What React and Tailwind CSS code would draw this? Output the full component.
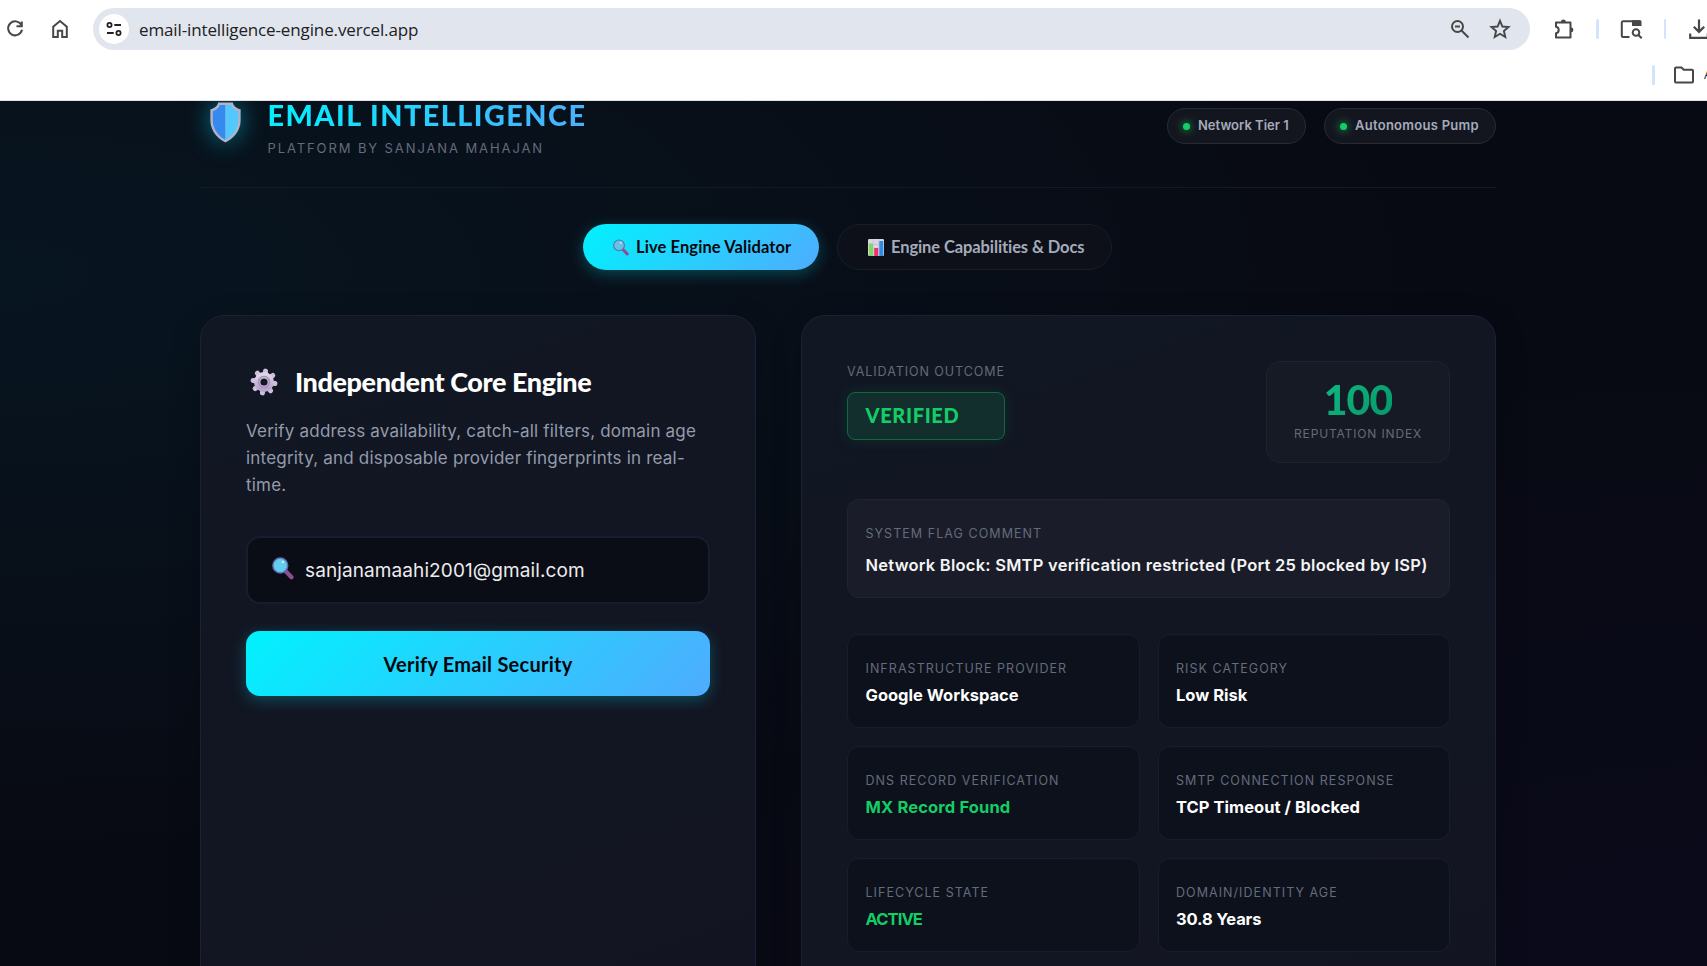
import React from 'react'
import { useState } from 'react'

// shared class strings
const display = "font-['Lato','Open_Sans',sans-serif]"
const card = 'rounded-[24px] border border-[#1c2234] bg-[linear-gradient(160deg,#111723,#131422)] shadow-[0_8px_32px_rgba(0,0,0,0.2)]'
const label = 'block leading-[18px] text-[#646b7b] uppercase whitespace-nowrap'

const cells = [
    { name: 'Infrastructure Provider', value: 'Google Workspace', valueCls: 'text-white' },
    { name: 'Risk Category', value: 'Low Risk', valueCls: 'text-white' },
    { name: 'DNS Record Verification', value: 'MX Record Found', valueCls: 'tracking-[0.15px] text-[#13ce66]' },
    { name: 'SMTP Connection Response', value: 'TCP Timeout / Blocked', valueCls: 'tracking-[0.05px] text-white' },
    { name: 'Lifecycle State', value: 'ACTIVE', valueCls: 'tracking-[-0.9px] text-[#13ce66]' },
    { name: 'Domain/Identity Age', value: '30.8 Years', valueCls: 'tracking-[-0.15px] text-white' },
]

const Magnifier = ({ className, lens = '#62cdec' }) => (
    <svg viewBox="0 0 22 23" className={className}>
        <path d="M14 14.5l5.5 5.8" stroke="#8d4f93" strokeWidth="4.2" strokeLinecap="round" />
        <circle cx="8.3" cy="8.5" r="7.4" fill={lens} stroke="#5d6fae" strokeWidth="1.5" />
        <circle cx="10.9" cy="5" r="1.3" fill="#b9efff" />
    </svg>
)

const Shield = () => (
    <svg viewBox="0 0 32 42" className="h-[41px] w-[33px] drop-shadow-[0_0_12px_rgba(0,200,230,0.55)]">
        <path d="M16 .5H8.5C8 3.5 5 6.5 .5 7.5V19C.5 30 9 38.5 16 41.5C23 38.5 31.5 30 31.5 19V7.5C27 6.5 24 3.5 23.5 .5Z" fill="#b5b1c6" />
        <path d="M16 3H10.2C9.4 5.8 6.5 8.5 3 9.5V19C3 28.5 10 36 16 38.7Z" fill="#3689ee" />
        <path d="M16 3H21.8C22.6 5.8 25.5 8.5 29 9.5V19C29 28.5 22 36 16 38.7Z" fill="#53c8ff" />
    </svg>
)

const Gear = () => (
    <svg viewBox="-14 -14 28 28" className="h-7 w-7">
        <defs>
            <linearGradient id="gear" x1="0" y1="0" x2="0" y2="1">
                <stop offset="0" stopColor="#ded4ea" />
                <stop offset="1" stopColor="#b9a3cf" />
            </linearGradient>
        </defs>
        <g stroke="#cdbfdd" strokeWidth="5" strokeLinecap="round">
            {[8, 53, 98, 143, 188, 233, 278, 323].map((a) => (
                <path key={a} d="M0 -7V-11" transform={`rotate(${a})`} />
            ))}
        </g>
        <circle r="6.8" fill="none" stroke="url(#gear)" strokeWidth="6.4" />
        <circle r="5.5" fill="none" stroke="#a794bb" strokeWidth="1.6" />
    </svg>
)

const Chart = () => (
    <svg viewBox="0 0 16 17" className="h-[17px] w-4">
        <rect width="16" height="17" rx="1.2" fill="#dcd6e4" />
        <path d="M0 5.5H16M0 11H16M5.3 0V17M10.7 0V17" stroke="#beb7cb" strokeWidth=".5" />
        <rect x="1" y="4.5" width="4" height="12.5" fill="#7fdb5d" />
        <rect x="6.2" y="9" width="4" height="8" fill="#e8336f" />
        <rect x="11.3" y="2" width="4" height="15" fill="#2f8de0" />
    </svg>
)

const Stroke = ({ className = '', children }) => (
    <svg viewBox="0 0 24 24" className={`size-6 shrink-0 ${className}`} fill="none" stroke="currentColor" strokeWidth="2">
        {children}
    </svg>
)

const Divider = ({ className = '' }) => <span className={`h-5 w-[2.5px] shrink-0 rounded-full bg-[#d3e3fd] ${className}`} />

const BrowserBar = () => (
    <div className="relative z-10 h-[101px] border-b border-[#dfe1e5] bg-white pt-2 text-[#474747] font-['Open_Sans','Noto_Sans',sans-serif]">
        <div className="flex h-[42px] items-center">
            <Stroke className="ml-[3px]">
                <path d="M18.2 7.8A7 7 0 1 0 19 12.8M18.8 4.5V9.2H13.5" />
            </Stroke>
            <Stroke className="ml-[21px]">
                <path d="M5.2 20V9.8L12 4l6.8 5.8V20h-4.6v-6.3H9.8V20z" />
            </Stroke>
            <div className="ml-[21px] flex h-[42px] w-[1437px] shrink-0 items-center rounded-full bg-[#e1e5ed] pr-[18px] pl-1.5">
                <div className="flex size-[30px] items-center justify-center rounded-full bg-white">
                    <svg viewBox="0 0 16 16" className="size-4" fill="none" stroke="#202124" strokeWidth="1.8">
                        <circle cx="3.5" cy="4" r="2.1" />
                        <path d="M8.3 4H15M1 12H7.7" />
                        <circle cx="12.5" cy="12" r="2.1" />
                    </svg>
                </div>
                <span className="mt-0.5 ml-2.5 text-[17px] tracking-[-0.13px] text-[#202124]">email-intelligence-engine.vercel.app</span>
                <Stroke className="mr-4 ml-auto">
                    <circle cx="9.5" cy="9.5" r="5.5" />
                    <path d="M13.5 13.5L20.5 20.5M7 9.5h5" />
                </Stroke>
                <Stroke>
                    <path strokeWidth="1.9" d="M12 3.8l2.4 5.7 6.1.5-4.600 4 1.400 6L12 16.800l-5.300 3.200 1.400-6-4.600-4 6.100-.5z" />
                </Stroke>
            </div>
            <Stroke className="ml-[22px]">
                <path d="M4 5.5h14.5v15H4v-4.2c3.6-.6 3.6-6 0-6.6z" strokeLinejoin="round" />
                <path d="M9 5a2.4 2.4 0 0 1 4.8 0zM19 10.5a2.4 2.4 0 0 1 0 4.8z" fill="currentColor" stroke="none" />
            </Stroke>
            <Divider className="ml-5" />
            <Stroke className="ml-5">
                <path d="M10.5 20H4a1.2 1.2 0 0 1-1.2-1.2V5.5A1.2 1.2 0 0 1 4 4.3h17.5" />
                <path d="M13 3.3h8a1.5 1.5 0 0 1 1.5 1.5v4.2H13z" fill="currentColor" stroke="none" />
                <circle cx="17" cy="15.5" r="3.3" />
                <path d="M19.4 18l3.3 3.3" />
            </Stroke>
            <Divider className="ml-[21px]" />
            <Stroke className="ml-[21px]">
                <path strokeWidth="2.2" d="M12 2.5v12M6.8 9.7l5.2 5.2 5.2-5.2M3.2 16.5v4.3h17.6v-4.3" />
            </Stroke>
        </div>
        <div className="mt-[15px] ml-[1652px] flex h-5 items-center">
            <Divider />
            <Stroke className="ml-[17.5px]">
                <path d="M3 5.5a1 1 0 0 1 1-1h5.5l2.2 2.3H20a1 1 0 0 1 1 1V18.5a1 1 0 0 1-1 1H4a1 1 0 0 1-1-1z" />
            </Stroke>
            <span className="ml-2 text-[13px] text-[#202124]">A</span>
        </div>
    </div>
)

const Pill = ({ className, text }) => (
    <div className={`flex h-9 items-center rounded-[18px] border border-[#282b34] bg-[#14161f] pl-[15px] text-[13px] font-semibold text-[#a4abbb] whitespace-nowrap ${className}`}>
        <span className="mr-2 size-[7px] rounded-full bg-[#13ce66] shadow-[0_0_8px_#13ce66]" />
        {text}
    </div>
)

const App = () => {
    const [email, setEmail] = useState('sanjanamaahi2001@gmail.com')

    return (
        <div className="h-[966px] w-[1707px] overflow-hidden bg-[#080a13] font-['Inter','Noto_Sans',sans-serif]">
            <BrowserBar />
            <div className="h-[865px] bg-[radial-gradient(ellipse_at_0%_20%,rgba(0,120,150,0.1),transparent_60%),radial-gradient(ellipse_at_100%_100%,rgba(40,10,130,0.07),transparent_50%)]">
                <div className="ml-[200px] w-[1296px]">
                    <header className="flex h-[87px] items-start justify-between border-b border-[#131925]">
                        <div className="flex">
                            <div className="mt-[1px] ml-[9px]">
                                <Shield />
                            </div>
                            <div className="ml-[25.5px]">
                                <h1 className={`${display} w-[320px] bg-[linear-gradient(135deg,#00f2fe,#4facfe)] bg-clip-text text-[28.8px] leading-[29px] font-black tracking-[1.45px] whitespace-nowrap text-transparent`}>
                                    EMAIL INTELLIGENCE
                                </h1>
                                <p className="mt-[9px] text-[13px] leading-[18px] tracking-[1.9px] whitespace-nowrap text-[#646b7b]">PLATFORM BY SANJANA MAHAJAN</p>
                            </div>
                        </div>
                        <div className="mt-[7px] flex gap-[18px]">
                            <Pill className="w-[139px]" text="Network Tier 1" />
                            <Pill className="w-[172px] tracking-[0.27px]" text="Autonomous Pump" />
                        </div>
                    </header>

                    <nav className={`${display} mt-9 flex gap-[18px] pl-[383px] text-[16.5px] font-bold`}>
                        <button className="flex h-[46px] w-[236px] items-center rounded-full bg-[linear-gradient(135deg,#00f2fe,#4facfe)] pl-[30px] tracking-[0.1px] whitespace-nowrap text-[#05070c] shadow-[0_4px_15px_rgba(0,242,254,0.25)]">
                            <Magnifier className="mr-[7px] h-[17px] w-4 shrink-0" lens="#67c2e2" />
                            Live Engine Validator
                        </button>
                        <button className="flex h-[46px] w-[275px] items-center rounded-full border border-[#171d2c] bg-[#0d1019] pl-[30px] tracking-[-0.1px] whitespace-nowrap text-[#a4abbb]">
                            <span className="mr-[7px] shrink-0"><Chart /></span>
                            Engine Capabilities &amp; Docs
                        </button>
                    </nav>

                    <main className="mt-[45px] flex gap-[45px]">
                        <section className={`${card} h-[760px] w-[556px] px-[45px] pt-[45px]`}>
                            <div className="flex h-[42px] items-center">
                                <span className="ml-1"><Gear /></span>
                                <h2 className={`${display} ml-[17px] text-[27px] font-black tracking-[-0.4px] whitespace-nowrap text-white`}>Independent Core Engine</h2>
                            </div>
                            <p className="mt-[15px] text-[17px] leading-[27px] tracking-[0.2px] whitespace-nowrap text-[#949bab]">
                                Verify address availability, catch-all filters, domain age<br />
                                integrity, and disposable provider fingerprints in real-<br />
                                time.
                            </p>
                            <div className="mt-[37px] flex h-[68px] items-center rounded-[14px] border-2 border-[#171c2e] bg-[#0a0d16] pl-6">
                                <Magnifier className="-mt-[3px] h-[23px] w-[22px] shrink-0" />
                                <input
                                    type="text"
                                    value={email}
                                    onChange={(event) => setEmail(event.target.value)}
                                    className="mt-0.5 ml-[11px] w-96 bg-transparent text-[19px] tracking-[0.1px] text-[#ececec] outline-none"
                                />
                            </div>
                            <button className={`${display} mt-[27px] h-[65px] w-full rounded-[14px] bg-[linear-gradient(135deg,#00f2fe,#4facfe)] text-[20px] font-bold tracking-[0.25px] text-[#05070c] shadow-[0_4px_15px_rgba(0,242,254,0.25)]`}>
                                Verify Email Security
                            </button>
                        </section>

                        <section className={`${card} h-[760px] w-[695px] px-[45px] pt-[45px]`}>
                            <div className="flex justify-between">
                                <div className="w-[158px]">
                                    <span className={`${label} mt-0.5 text-[12.5px] tracking-[0.95px]`}>Validation Outcome</span>
                                    <div className={`${display} mt-[11px] flex h-12 items-center rounded-lg border border-[#13693f] bg-[#122f2d] pb-0.5 pl-[17.5px] text-[20px] font-black tracking-[0.65px] text-[#13ce66] shadow-[0_0_15px_rgba(19,206,102,0.12)]`}>
                                        VERIFIED
                                    </div>
                                </div>
                                <div className="flex h-[102px] w-[184px] flex-col items-center rounded-[14px] border border-[#1c2234] bg-[#161a24]">
                                    <span className={`${display} mt-4 bg-[linear-gradient(135deg,#10b981,#059669)] bg-clip-text text-[41px] leading-[44px] font-black tracking-[-1px] text-transparent`}>100</span>
                                    <span className={`${label} mt-[3px] text-[12px] tracking-[0.85px]`}>Reputation Index</span>
                                </div>
                            </div>

                            <div className="mt-9 h-[99px] rounded-xl border border-[#1d2437] bg-[#1a1d29] pt-[25px] pl-[17.5px]">
                                <span className={`${label} text-[12.5px] tracking-[1.05px]`}>System Flag Comment</span>
                                <p className="mt-2.5 text-[16.5px] leading-6 font-semibold tracking-[0.24px] whitespace-nowrap text-[#f4f4f4]">
                                    Network Block: SMTP verification restricted (Port 25 blocked by ISP)
                                </p>
                            </div>

                            <div className="mt-9 grid grid-cols-2 gap-[18px]">
                                {cells.map((cell) => (
                                    <div key={cell.name} className="h-[94px] rounded-xl border border-[#181d2d] bg-[#0d111b] pt-[25px] pl-[17.5px]">
                                        <span className={`${label} text-[12.5px] tracking-[1.05px]`}>{cell.name}</span>
                                        <p className={`mt-[5px] text-[16.5px] leading-6 font-bold whitespace-nowrap ${cell.valueCls}`}>{cell.value}</p>
                                    </div>
                                ))}
                            </div>
                        </section>
                    </main>
                </div>
            </div>
        </div>
    )
}

export default App
